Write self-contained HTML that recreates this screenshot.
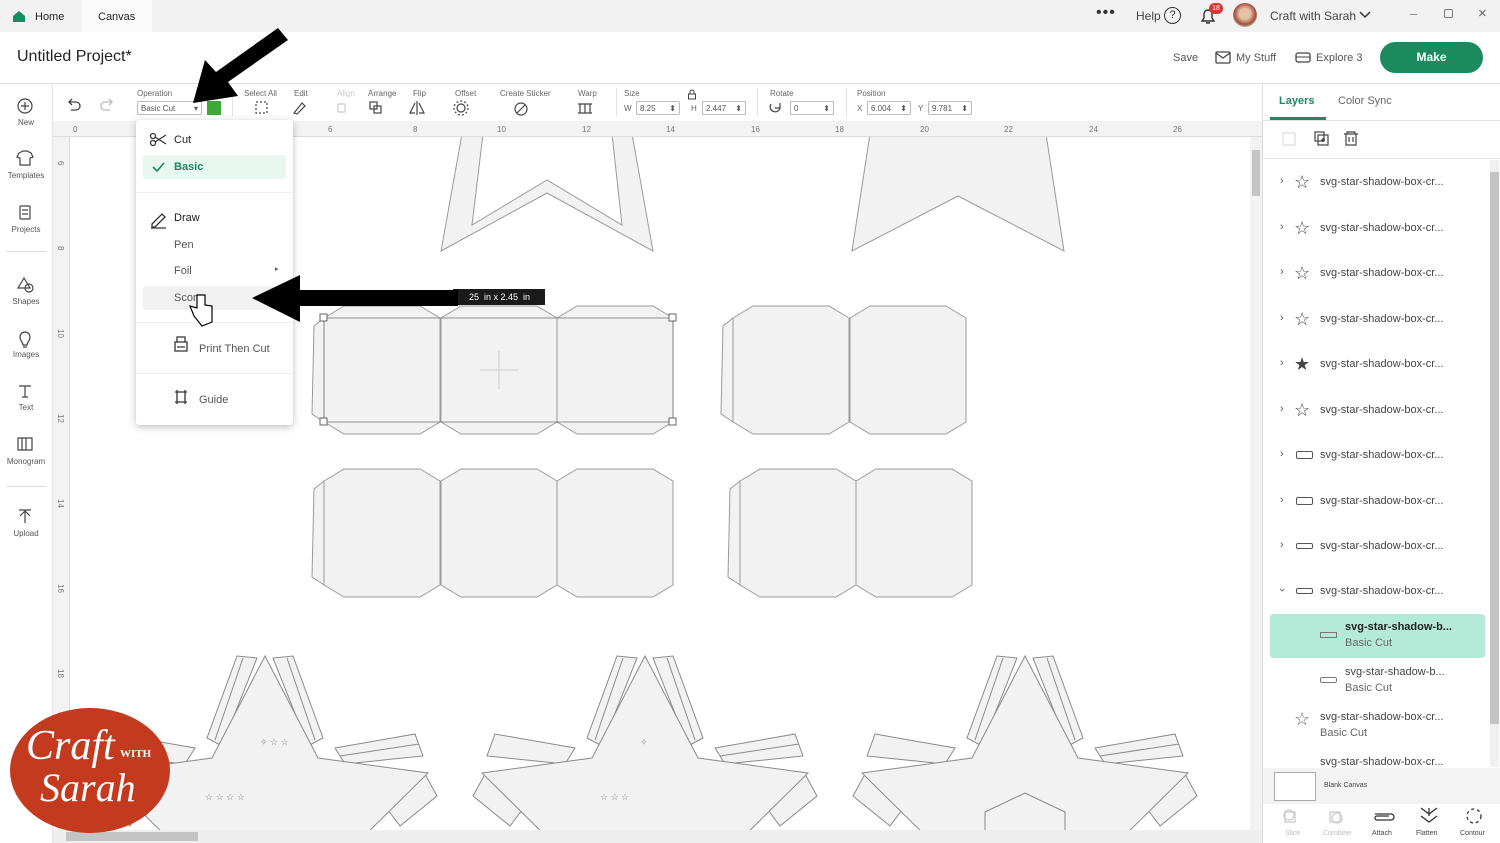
<!DOCTYPE html>
<html><head><meta charset="utf-8"><style>
*{margin:0;padding:0;box-sizing:border-box}
body{width:1500px;height:843px;overflow:hidden;position:relative;background:#fff;font-family:"Liberation Sans",sans-serif;color:#333}
.a{position:absolute;white-space:nowrap}
.lbl{position:absolute;font-size:8px;color:#666;top:89px}
.sb{position:absolute;left:0;width:52px;text-align:center;font-size:8px;color:#555}
.ly{position:absolute;left:1280px;width:200px;height:16px;font-size:11px;color:#444;white-space:nowrap}
.ly .c{position:absolute;left:0;top:-1px;font-size:11px;color:#555}
.ly .n{position:absolute;left:40px;top:0;white-space:nowrap}
.mi{position:absolute;font-size:11px;color:#555}
.inp{position:absolute;top:101px;height:14px;border:1px solid #bbb;border-radius:2px;font-size:8px;color:#555;padding:2px 3px}
</style></head><body>
<!-- top bar -->
<div class="a" style="left:0;top:0;width:1500px;height:32px;background:#f2f2f2"></div>
<div class="a" style="left:82px;top:0;width:70px;height:32px;background:#fafafa"></div>
<svg class="a" style="left:12px;top:10px" width="14" height="13"><path d="M1 6 L7 1 L13 6 V12 H1 Z" fill="#1b8a5e"/></svg>
<div class="a" style="left:35px;top:11px;font-size:11px;color:#222">Home</div>
<div class="a" style="left:98px;top:11px;font-size:11px;color:#222">Canvas</div>
<div class="a" style="left:1096px;top:4px;font-size:16px;color:#333;letter-spacing:1px">•••</div>
<div class="a" style="left:1136px;top:9px;font-size:12px;color:#444">Help</div>
<div class="a" style="left:1164px;top:7px;width:17px;height:17px;border:1.5px solid #333;border-radius:50%;font-size:11px;text-align:center;line-height:14px">?</div>
<svg class="a" style="left:1198px;top:6px" width="20" height="20"><path d="M4 15 H16 L14 12 V8 A4 4 0 0 0 6 8 V12 Z M8 17 H12" fill="none" stroke="#333" stroke-width="1.4"/></svg>
<div class="a" style="left:1209px;top:3px;width:14px;height:11px;background:#d33;border-radius:6px;font-size:7px;color:#fff;text-align:center;line-height:11px">18</div>
<div class="a" style="left:1233px;top:3px;width:24px;height:24px;border-radius:50%;background:radial-gradient(circle at 50% 45%,#e8c0a8 30%,#a0503a 60%,#bbb 75%)"></div>
<div class="a" style="left:1270px;top:9px;font-size:12px;color:#444">Craft with Sarah</div>
<svg class="a" style="left:1359px;top:11px" width="12" height="8"><path d="M1 1 L6 6 L11 1" fill="none" stroke="#333" stroke-width="1.5"/></svg>
<div class="a" style="left:1410px;top:6px;font-size:13px;color:#888">–</div>
<div class="a" style="left:1444px;top:9px;width:9px;height:9px;border:1px solid #777;border-radius:2px"></div>
<div class="a" style="left:1478px;top:5px;font-size:15px;color:#666">×</div>
<!-- project bar -->
<div class="a" style="left:17px;top:48px;font-size:16px;color:#222">Untitled Project*</div>
<div class="a" style="left:1173px;top:52px;font-size:11px;color:#555">Save</div>
<svg class="a" style="left:1215px;top:51px" width="16" height="13"><rect x="1" y="1" width="14" height="11" rx="1" fill="none" stroke="#444" stroke-width="1.3"/><path d="M1 2 L8 7 L15 2" fill="none" stroke="#444" stroke-width="1.3"/></svg>
<div class="a" style="left:1236px;top:52px;font-size:11px;color:#555">My Stuff</div>
<svg class="a" style="left:1295px;top:52px" width="16" height="11"><rect x="1" y="1" width="14" height="9" rx="2" fill="none" stroke="#444" stroke-width="1.3"/><path d="M1 5 H15" stroke="#444"/></svg>
<div class="a" style="left:1316px;top:52px;font-size:11px;color:#555">Explore 3</div>
<div class="a" style="left:1380px;top:42px;width:103px;height:31px;border-radius:16px;background:#1b8a5e;color:#fff;font-size:12px;font-weight:bold;text-align:center;line-height:31px">Make</div>
<div class="a" style="left:0;top:83px;width:1500px;height:1px;background:#ddd"></div>
<!-- toolbar -->
<svg class="a" style="left:66px;top:97px" width="50" height="14"><path d="M3 5 H10 A4 4 0 0 1 10 13 H5 M6 2 L3 5 L6 8" fill="none" stroke="#444" stroke-width="1.3"/><path d="M46 5 H39 A4 4 0 0 0 39 13 H44 M43 2 L46 5 L43 8" fill="none" stroke="#bbb" stroke-width="1.3"/></svg>
<div class="lbl" style="left:137px">Operation</div>
<div class="inp" style="left:137px;width:65px">Basic Cut <span style="float:right">▾</span></div>
<div class="a" style="left:207px;top:101px;width:14px;height:14px;background:#3aaa35"></div>
<div class="lbl" style="left:244px">Select All</div>
<div class="lbl" style="left:294px">Edit</div>
<div class="lbl" style="left:337px;color:#ccc">Align</div>
<div class="lbl" style="left:368px">Arrange</div>
<div class="lbl" style="left:413px">Flip</div>
<div class="lbl" style="left:455px">Offset</div>
<div class="lbl" style="left:500px">Create Sticker</div>
<div class="lbl" style="left:578px">Warp</div>
<div class="lbl" style="left:624px">Size</div>
<div class="lbl" style="left:770px">Rotate</div>
<div class="lbl" style="left:857px">Position</div>
<svg class="a" style="left:250px;top:99px" width="730" height="18" fill="none" stroke="#444" stroke-width="1.2">
<rect x="6" y="3" width="11" height="11" stroke-dasharray="2 2"/>
<path d="M44 14 L52 4 L55 7 L47 15 Z"/>
<rect x="88" y="5" width="7" height="8" stroke="#ccc"/>
<rect x="120" y="3" width="7" height="7"/><rect x="124" y="7" width="7" height="7"/>
<path d="M167 2 V16 M165 4 L160 14 H165 M169 4 L174 14 H169"/>
<circle cx="211" cy="9" r="4"/><circle cx="211" cy="9" r="7" stroke-dasharray="2 2"/>
<circle cx="271" cy="10" r="6"/><path d="M267 14 L275 6"/>
<path d="M328 5 H342 M328 14 H342 M330 5 V14 M335 5 V14 M340 5 V14"/>
<path d="M521 5 A5 5 0 1 0 530 9 M530 4 V9 H525"/>
</svg>
<div class="a" style="left:624px;top:104px;font-size:8px;color:#666">W</div>
<div class="inp" style="left:636px;width:44px">8.25 <span style="float:right">⬍</span></div>
<div class="a" style="left:691px;top:104px;font-size:8px;color:#666">H</div>
<div class="inp" style="left:702px;width:44px">2.447 <span style="float:right">⬍</span></div>
<svg class="a" style="left:687px;top:89px" width="10" height="11"><rect x="1.5" y="5" width="7" height="5" fill="none" stroke="#444"/><path d="M3 5 V3 A2 2 0 0 1 7 3 V5" fill="none" stroke="#444"/></svg>
<div class="inp" style="left:790px;width:44px">0 <span style="float:right">⬍</span></div>
<div class="a" style="left:857px;top:104px;font-size:8px;color:#666">X</div>
<div class="inp" style="left:867px;width:44px">6.004 <span style="float:right">⬍</span></div>
<div class="a" style="left:918px;top:104px;font-size:8px;color:#666">Y</div>
<div class="inp" style="left:928px;width:44px">9.781 <span style="float:right">⬍</span></div>
<div class="a" style="left:232px;top:88px;width:1px;height:28px;background:#e3e3e3"></div>
<div class="a" style="left:616px;top:88px;width:1px;height:28px;background:#e3e3e3"></div>
<div class="a" style="left:757px;top:88px;width:1px;height:28px;background:#e3e3e3"></div>
<div class="a" style="left:846px;top:88px;width:1px;height:28px;background:#e3e3e3"></div>
<!-- left sidebar -->
<div class="a" style="left:52px;top:84px;width:1px;height:759px;background:#e3e3e3"></div>
<svg class="a" style="left:0;top:95px" width="52" height="440" fill="none" stroke="#444" stroke-width="1.2">
<circle cx="25" cy="11" r="7"/><path d="M25 7 V15 M21 11 H29"/>
<path d="M19 58 L23 56 H27 L31 58 L33 62 L30 63 V70 H20 V63 L17 62 Z"/>
<rect x="20" y="111" width="10" height="13" rx="1"/><path d="M22 115 H28 M22 119 H28"/>
<path d="M24 183 L30 193 H18 Z"/><circle cx="29" cy="193" r="4"/>
<path d="M25 237 A5 5 0 0 1 30 242 C30 246 27 247 27 250 H23 C23 247 20 246 20 242 A5 5 0 0 1 25 237 M23 252 H27"/>
<path d="M19 291 H31 M25 291 V302 M22 302 H28"/>
<path d="M18 343 H32 V355 H18 Z M22 343 V355 M26 343 V355"/>
<path d="M25 417 V428 M20 421 L25 416 L30 421 M19 415 H31"/>
</svg>
<div class="sb" style="top:118px">New</div>
<div class="sb" style="top:171px">Templates</div>
<div class="sb" style="top:225px">Projects</div>
<div class="sb" style="top:297px">Shapes</div>
<div class="sb" style="top:350px">Images</div>
<div class="sb" style="top:403px">Text</div>
<div class="sb" style="top:457px">Monogram</div>
<div class="sb" style="top:529px">Upload</div>
<div class="a" style="left:6px;top:251px;width:40px;height:1px;background:#ddd"></div>
<div class="a" style="left:6px;top:486px;width:40px;height:1px;background:#ddd"></div>
<!-- rulers -->
<div class="a" style="left:53px;top:121px;width:1209px;height:16px;background:#f3f3f3;border-bottom:1px solid #ddd"></div>
<div class="a" style="left:53px;top:137px;width:17px;height:693px;background:#f3f3f3;border-right:1px solid #ddd"></div>
<svg class="a" style="left:53px;top:121px" width="1209" height="709" font-family="Liberation Sans" font-size="8" fill="#777">
<text x="20" y="11">0</text><text x="275" y="11">6</text><text x="360" y="11">8</text><text x="444" y="11">10</text><text x="529" y="11">12</text><text x="613" y="11">14</text><text x="698" y="11">16</text><text x="782" y="11">18</text><text x="867" y="11">20</text><text x="951" y="11">22</text><text x="1036" y="11">24</text><text x="1120" y="11">26</text>
<g transform="rotate(90)"><text x="40" y="-5">6</text><text x="125" y="-5">8</text><text x="208" y="-5">10</text><text x="293" y="-5">12</text><text x="378" y="-5">14</text><text x="463" y="-5">16</text><text x="548" y="-5">18</text></g>
</svg>
<!-- canvas -->
<svg class="a" style="left:70px;top:137px" width="1180" height="693" viewBox="70 137 1180 693">
<defs>
<path id="p" d="M0 0 L20 -12 L96 -12 L116 0 L116 104 L96 116 L20 116 L0 104 Z" fill="#f2f2f2" stroke="#9a9a9a" stroke-width="1"/>
<path id="t" d="M0 0 L-10 8 L-12 96 L0 104" fill="#f2f2f2" stroke="#9a9a9a"/>
<g id="star" fill="#f2f2f2" stroke="#8a8a8a" stroke-width="1">
<path d="M-58 82 L-28 0 L-8 2 L-43 90 Z"/><path d="M-50 84 L-22 2" fill="none"/>
<path d="M58 82 L28 0 L8 2 L43 90 Z"/><path d="M50 84 L22 2" fill="none"/>
<path d="M70 92 L150 78 L158 100 L80 108 Z"/><path d="M75 100 L154 88" fill="none"/>
<path d="M-70 92 L-150 78 L-158 100 L-80 108 Z"/>
<path d="M120 150 L160 118 L172 140 L135 170 Z"/><path d="M-120 150 L-160 118 L-172 140 L-135 170 Z"/>
<path d="M0 0 L53 102 L163 117 L85 194 L-85 194 L-163 117 L-53 102 Z"/>
</g>
</defs>
<rect x="70" y="137" width="1180" height="693" fill="#fff"/>
<g fill="#f2f2f2" stroke="#9a9a9a">
<path d="M462 134 L441 251 L547 193 L653 251 L632 134 L612 134 L622 225 L547 180 L472 225 L483 134 Z"/>
<path d="M870 134 L852 251 L958 196 L1064 251 L1046 134 Z"/>
</g>
<use href="#t" x="324" y="318"/><use href="#p" x="324" y="318"/><use href="#p" x="441" y="318"/><use href="#p" x="557" y="318"/>
<use href="#t" x="733" y="318"/><use href="#p" x="733" y="318"/><use href="#p" x="850" y="318"/>
<use href="#t" x="324" y="481"/><use href="#p" x="324" y="481"/><use href="#p" x="441" y="481"/><use href="#p" x="557" y="481"/>
<use href="#t" x="740" y="481"/><use href="#p" x="740" y="481"/><use href="#p" x="856" y="481"/>
<path d="M480 370 H518 M499 351 V389" stroke="#ccc"/>
<rect x="324" y="318" width="349" height="104" fill="none" stroke="#777" stroke-width="0.8"/>
<g fill="#fff" stroke="#666"><rect x="320" y="314" width="7" height="7"/><rect x="669" y="314" width="7" height="7"/><rect x="320" y="418" width="7" height="7"/><rect x="669" y="418" width="7" height="7"/></g>
<use href="#star" x="265" y="656"/><use href="#star" x="645" y="656"/><use href="#star" x="1025" y="656"/>
<g font-size="9" fill="#888"><text x="260" y="745">✧ ☆ ☆</text><text x="205" y="800">☆ ☆ ☆ ☆</text><text x="640" y="745">✧</text><text x="600" y="800">☆ ☆ ☆</text></g>
<path d="M985 830 V812 L1025 793 L1065 812 V830" fill="none" stroke="#888"/>
</svg>
<!-- canvas scrollbars -->
<div class="a" style="left:53px;top:830px;width:1209px;height:13px;background:#eee"></div>
<div class="a" style="left:66px;top:832px;width:132px;height:9px;background:#c4c4c4"></div>
<div class="a" style="left:1250px;top:137px;width:12px;height:693px;background:#f2f2f2"></div>
<div class="a" style="left:1252px;top:150px;width:8px;height:46px;background:#c4c4c4"></div>
<!-- logo -->
<div class="a" style="left:10px;top:708px;width:160px;height:125px;border-radius:50%;background:#c33a1e"></div>
<div class="a" style="left:26px;top:722px;font-family:'Liberation Serif',serif;font-style:italic;font-size:42px;color:#fff">Craft</div>
<div class="a" style="left:120px;top:748px;font-family:'Liberation Serif',serif;font-size:11px;color:#fff;font-weight:bold">WITH</div>
<div class="a" style="left:40px;top:764px;font-family:'Liberation Serif',serif;font-style:italic;font-size:40px;color:#fff">Sarah</div>
<!-- dropdown -->
<div class="a" style="left:136px;top:120px;width:157px;height:305px;background:#fff;box-shadow:0 2px 8px rgba(0,0,0,.25);border-radius:3px"></div>
<div class="a" style="left:143px;top:155px;width:143px;height:24px;background:#e8f7ef;border-radius:3px"></div>
<div class="a" style="left:143px;top:286px;width:143px;height:24px;background:#f1f1f1;border-radius:3px"></div>
<div class="a" style="left:136px;top:192px;width:157px;height:1px;background:#eee"></div>
<div class="a" style="left:136px;top:322px;width:157px;height:1px;background:#eee"></div>
<div class="a" style="left:136px;top:373px;width:157px;height:1px;background:#eee"></div>
<svg class="a" style="left:148px;top:130px" width="40" height="280" fill="none" stroke="#333" stroke-width="1.3">
<circle cx="5" cy="6" r="2.5"/><circle cx="5" cy="13" r="2.5"/><path d="M7 7 L18 14 M7 12 L18 5"/>
<path d="M5 37 L9 41 L16 33" stroke="#1b8a5e" stroke-width="1.6"/>
<path d="M4 94 L14 84 L17 87 L7 97 H4 Z M3 98 H18"/>
<path d="M29 212 H41 V221 H29 Z M31 212 V207 H39 V212 M31 217 H39" transform="translate(-2,0)"/>
<path d="M29 262 H41 M29 272 H41 M31 260 V274 M39 260 V274" transform="translate(-2,0)"/>
</svg>
<div class="mi" style="left:174px;top:134px;color:#222">Cut</div>
<div class="mi" style="left:174px;top:161px;color:#1b8a5e;font-weight:bold">Basic</div>
<div class="mi" style="left:174px;top:212px;color:#222">Draw</div>
<div class="mi" style="left:174px;top:239px">Pen</div>
<div class="mi" style="left:174px;top:265px">Foil</div>
<div class="mi" style="left:275px;top:265px;font-size:7px">▸</div>
<div class="mi" style="left:174px;top:292px">Scor</div>
<div class="mi" style="left:199px;top:343px">Print Then Cut</div>
<div class="mi" style="left:199px;top:394px">Guide</div>
<!-- tooltip -->
<div class="a" style="left:453px;top:289px;width:92px;height:16px;background:#1a1a1a;color:#fff;font-size:9px;line-height:16px;padding-left:16px">25 &nbsp;in x 2.45 &nbsp;in</div>
<!-- arrows -->
<svg class="a" style="left:0;top:0" width="560" height="340">
<path d="M458 290 H300 V275 L252 298 L300 322 V306 H458 Z" fill="#000"/>
<path d="M278 28 L288 40 L228 82 L238 96 L193 103 L205 60 L216 72 Z" fill="#000"/>
<path d="M197 295 L205 295 L205 305 L212 306 V322 L202 326 L194 316 L190 306 L197 308 Z" fill="#fff" stroke="#000" stroke-width="1.2"/>
</svg>
<!-- right panel -->
<div class="a" style="left:1262px;top:84px;width:1px;height:759px;background:#ddd"></div>
<div class="a" style="left:1279px;top:95px;font-size:11px;color:#1b8a5e;font-weight:bold">Layers</div>
<div class="a" style="left:1338px;top:95px;font-size:11px;color:#666">Color Sync</div>
<div class="a" style="left:1270px;top:117px;width:56px;height:3px;background:#1b8a5e"></div>
<div class="a" style="left:1263px;top:120px;width:237px;height:1px;background:#e5e5e5"></div>
<svg class="a" style="left:1280px;top:130px" width="90" height="20" fill="none" stroke="#444" stroke-width="1.2">
<rect x="3" y="3" width="12" height="12" stroke="#ddd"/>
<rect x="35" y="2" width="9" height="9"/><rect x="38" y="5" width="10" height="10"/><path d="M43 8 V12 M41 10 H45"/>
<path d="M64 4 H78 M67 4 V2 H75 V4 M66 4 V15 H76 V4 M69 7 V12 M73 7 V12"/>
</svg>
<div class="a" style="left:1263px;top:158px;width:237px;height:1px;background:#e5e5e5"></div>
<div class="a" style="left:1490px;top:160px;width:9px;height:607px;background:#f0f0f0"></div>
<div class="a" style="left:1490px;top:172px;width:9px;height:552px;background:#c4c4c4"></div>
<div class="ly" style="top:176px"><span class="c">›</span><span class="a" style="left:14px;top:-4px;font-size:18px">☆</span><span class="n">svg-star-shadow-box-cr...</span></div>
<div class="ly" style="top:222px"><span class="c">›</span><span class="a" style="left:14px;top:-4px;font-size:18px">☆</span><span class="n">svg-star-shadow-box-cr...</span></div>
<div class="ly" style="top:267px"><span class="c">›</span><span class="a" style="left:14px;top:-4px;font-size:18px">☆</span><span class="n">svg-star-shadow-box-cr...</span></div>
<div class="ly" style="top:313px"><span class="c">›</span><span class="a" style="left:14px;top:-4px;font-size:18px">☆</span><span class="n">svg-star-shadow-box-cr...</span></div>
<div class="ly" style="top:358px"><span class="c">›</span><span class="a" style="left:14px;top:-4px;font-size:18px">★</span><span class="n">svg-star-shadow-box-cr...</span></div>
<div class="ly" style="top:404px"><span class="c">›</span><span class="a" style="left:14px;top:-4px;font-size:18px">☆</span><span class="n">svg-star-shadow-box-cr...</span></div>
<div class="ly" style="top:449px"><span class="c">›</span><span class="a" style="left:16px;top:2px;width:17px;height:8px;border:1px solid #555;border-radius:2px"></span><span class="n">svg-star-shadow-box-cr...</span></div>
<div class="ly" style="top:495px"><span class="c">›</span><span class="a" style="left:16px;top:2px;width:17px;height:8px;border:1px solid #555;border-radius:2px"></span><span class="n">svg-star-shadow-box-cr...</span></div>
<div class="ly" style="top:540px"><span class="c">›</span><span class="a" style="left:16px;top:3px;width:17px;height:6px;border:1px solid #555;border-radius:2px"></span><span class="n">svg-star-shadow-box-cr...</span></div>
<div class="ly" style="top:585px"><span class="c" style="transform:rotate(90deg)">›</span><span class="a" style="left:16px;top:3px;width:17px;height:6px;border:1px solid #555;border-radius:2px"></span><span class="n">svg-star-shadow-box-cr...</span></div>
<div class="a" style="left:1270px;top:614px;width:215px;height:44px;background:#b3ead8;border-radius:3px"></div>
<div class="a" style="left:1320px;top:632px;width:17px;height:6px;border:1px solid #777"></div>
<div class="a" style="left:1345px;top:621px;font-size:11px;color:#222;font-weight:bold">svg-star-shadow-b...</div>
<div class="a" style="left:1345px;top:637px;font-size:11px;color:#666">Basic Cut</div>
<div class="a" style="left:1320px;top:677px;width:17px;height:6px;border:1px solid #777;border-radius:2px"></div>
<div class="a" style="left:1345px;top:666px;font-size:11px;color:#444">svg-star-shadow-b...</div>
<div class="a" style="left:1345px;top:682px;font-size:11px;color:#666">Basic Cut</div>
<div class="a" style="left:1294px;top:709px;font-size:18px;color:#666">☆</div>
<div class="a" style="left:1320px;top:711px;font-size:11px;color:#444">svg-star-shadow-box-cr...</div>
<div class="a" style="left:1320px;top:727px;font-size:11px;color:#666">Basic Cut</div>
<div class="a" style="left:1320px;top:756px;font-size:11px;color:#444">svg-star-shadow-box-cr...</div>
<div class="a" style="left:1263px;top:768px;width:237px;height:36px;background:#f3f3f3"></div>
<div class="a" style="left:1274px;top:772px;width:42px;height:29px;background:#fff;border:1px solid #aaa"></div>
<div class="a" style="left:1324px;top:782px;font-size:7px;color:#444">Blank Canvas</div>
<svg class="a" style="left:1263px;top:806px" width="237" height="22" fill="none" stroke="#333" stroke-width="1.3">
<rect x="22" y="6" width="10" height="10" stroke="#ccc"/><circle cx="26" cy="9" r="5" stroke="#ccc"/>
<rect x="67" y="6" width="10" height="10" stroke="#ccc"/><circle cx="74" cy="12" r="5" stroke="#ccc"/>
<path d="M112 8 H128 A3 3 0 0 1 128 14 H114 A2 2 0 0 1 114 10 H126"/>
<path d="M158 2 L166 8 L174 2 M158 10 L166 16 L174 10 M166 2 V10"/>
<circle cx="211" cy="10" r="7" stroke-dasharray="3 3"/>
</svg>
<div class="a" style="left:1285px;top:830px;font-size:7px;color:#bbb">Slice</div>
<div class="a" style="left:1323px;top:830px;font-size:7px;color:#bbb">Combine</div>
<div class="a" style="left:1372px;top:830px;font-size:7px;color:#444">Attach</div>
<div class="a" style="left:1416px;top:830px;font-size:7px;color:#444">Flatten</div>
<div class="a" style="left:1460px;top:830px;font-size:7px;color:#444">Contour</div>
</body></html>
